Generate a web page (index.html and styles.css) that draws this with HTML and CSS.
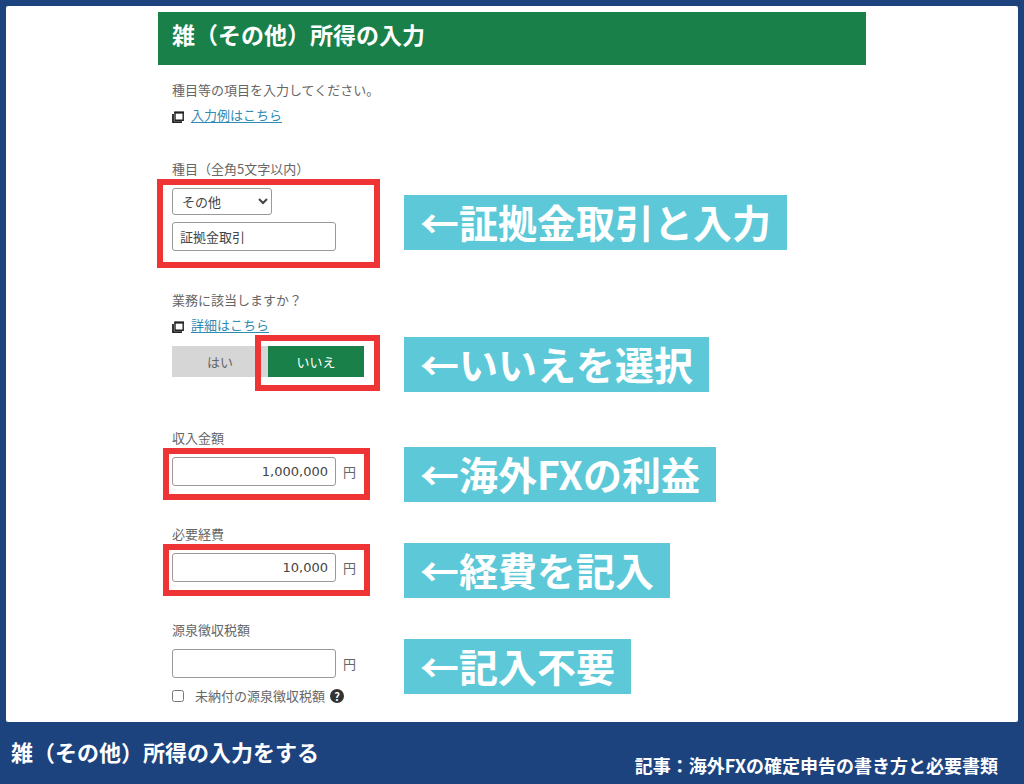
FILE: index.html
```
<!DOCTYPE html>
<html lang="ja">
<head>
  <meta charset="UTF-8">
  <meta name="viewport" content="width=device-width, initial-scale=1">
  <title>雑（その他）所得の入力</title>
  <link rel="stylesheet" href="styles.css">
</head>
<body>
  <main class="sheet">
    <form class="form">
      <h1 class="form-title">雑（その他）所得の入力</h1>

      <div class="intro">
        <p class="line">種目等の項目を入力してください。</p>
        <p class="line">
          <svg class="window-icon" viewBox="0 0 12 12"><use href="#window"/></svg>
          <a href="#">入力例はこちら</a>
        </p>
      </div>

      <!-- Item -->
      <div class="field">
        <label class="line" for="item">種目（全角5文字以内）</label>
        <div class="controls">
          <div class="control-area stack marked marked--item">
            <select class="select" id="item">
              <option>その他</option>
            </select>
            <input class="text-box" type="text" value="証拠金取引" aria-label="種目">
          </div>
          <span class="callout">←証拠金取引と入力</span>
        </div>
      </div>

      <!-- Business yes / no -->
      <div class="field field--choice">
        <p class="line">業務に該当しますか？</p>
        <p class="line">
          <svg class="window-icon" viewBox="0 0 12 12"><use href="#window"/></svg>
          <a href="#">詳細はこちら</a>
        </p>
        <div class="controls">
          <div class="control-area choices">
            <button class="choice" type="button">はい</button>
            <span class="marked marked--choice">
              <button class="choice choice--on" type="button">いいえ</button>
            </span>
          </div>
          <span class="callout">←いいえを選択</span>
        </div>
      </div>

      <!-- Amounts -->
      <div class="field field--income">
        <label class="line" for="income">収入金額</label>
        <div class="controls">
          <div class="control-area">
            <span class="amount marked marked--amount">
              <input class="text-box text-box--number" type="text" id="income" value="1,000,000">円
            </span>
          </div>
          <span class="callout">←海外FXの利益</span>
        </div>
      </div>

      <div class="field">
        <label class="line" for="expenses">必要経費</label>
        <div class="controls">
          <div class="control-area">
            <span class="amount marked marked--amount">
              <input class="text-box text-box--number" type="text" id="expenses" value="10,000">円
            </span>
          </div>
          <span class="callout">←経費を記入</span>
        </div>
      </div>

      <div class="field">
        <label class="line" for="withheld">源泉徴収税額</label>
        <div class="controls">
          <div class="control-area">
            <span class="amount">
              <input class="text-box text-box--number" type="text" id="withheld">円
            </span>
          </div>
          <span class="callout">←記入不要</span>
        </div>
        <div class="check-row">
          <input class="check" type="checkbox" id="unpaid">
          <label for="unpaid">未納付の源泉徴収税額</label>
          <button class="help" type="button">?</button>
        </div>
      </div>
    </form>
  </main>

  <footer class="caption">
    <strong class="caption-title">雑（その他）所得の入力をする</strong>
    <span class="caption-source">記事：海外FXの確定申告の書き方と必要書類</span>
  </footer>

  <!-- SVG -->
  <svg style="display: none;">
    <symbol id="window" viewBox="0 0 12 12">
      <path d="M3 1.5H11.2V9.2H3Z" fill="#fff" stroke="#222" stroke-width="1.4"/>
      <path d="M2.3 1.5H12" stroke="#222" stroke-width="2"/>
      <path d="M1 3V11.2H10" fill="none" stroke="#222" stroke-width="1.8"/>
    </symbol>
  </svg>
</body>
</html>
```

FILE: styles.css
```
*, *:before,
*:after {
  box-sizing: border-box;
}

body {
  margin: 0;
  padding: 6px 6px 0;
  min-height: 100vh;
  display: flex;
  flex-direction: column;
  background: #1d437f;
  color: #666;
  font: 400 13px/25px "Noto Sans CJK JP", sans-serif;
}

p,
h1 {
  margin: 0;
}

a {
  color: #2f8bb3;
  text-underline-offset: 2px;
}

input,
select,
button {
  margin: 0;
  font: inherit;
  color: inherit;
}

.sheet {
  padding: 6px 0 14px;
  background: #fff;
  border-radius: 2px;
}

.form {
  max-width: 708px;
  margin: 0 auto;
}

.form-title {
  padding: 7px 14px 16px;
  background: #1a804a;
  color: #fff;
  font-size: 23px;
  line-height: 30px;
}

.intro {
  padding: 12px 14px 0;
}

.line {
  display: flex;
  align-items: center;
}

.window-icon {
  width: 12px;
  height: 12px;
  margin: 4px 7px 0 0;
}

.field {
  padding: 0 14px;
  margin-top: 35px;
}

.intro + .field {
  margin-top: 29px;
}

.field--choice {
  margin-top: 36px;
}

.field--income {
  margin-top: 48px;
}

.controls {
  display: flex;
  align-items: center;
  margin-top: 7px;
}

.field--choice .controls {
  margin-top: 9px;
}

.control-area {
  flex: none;
  width: 232px;
}

.stack {
  display: flex;
  flex-direction: column;
  align-items: flex-start;
  gap: 7px;
}

.select {
  width: 100px;
  height: 27px;
  padding: 0 0 0 5px;
  border: 1px solid #999;
  border-radius: 3px;
  background: #fff;
  color: #444;
}

.text-box {
  width: 164px;
  height: 29px;
  padding: 0 7px;
  border: 1px solid #999;
  border-radius: 3px;
  background: #fff;
  color: #444;
}

.text-box--number {
  font-family: "DejaVu Sans", sans-serif;
  text-align: right;
}

.amount {
  display: flex;
  align-items: center;
  width: 184px;
  gap: 7px;
}

.choices {
  display: flex;
}

.choice {
  display: block;
  width: 96px;
  height: 31px;
  padding: 0;
  border: 0;
  background: #d6d6d6;
}

.choice--on {
  background: #1a804a;
  color: #fff;
}

/* Red frame drawn over the controls */
.marked {
  position: relative;
}

.marked::after {
  content: "";
  position: absolute;
  border: 6px solid #ee3434;
  pointer-events: none;
}

.marked--item::after {
  inset: -9px 24px -17px -15px;
}

.marked--choice::after {
  inset: -11px -16px -14px -13px;
}

.marked--amount::after {
  inset: -9px -14px -14px -9px;
}

.callout {
  flex: none;
  margin: -10px 0 -16px;
  padding: 0 16px 3px;
  background: #5dc9d8;
  color: #fff;
  font-size: 39px;
  font-weight: 700;
  line-height: 52px;
}

.check-row {
  display: flex;
  align-items: center;
  margin-top: 5px;
}

.check {
  width: 12px;
  height: 12px;
  margin-right: 11px;
}

.help {
  width: 14px;
  height: 14px;
  margin-left: 5px;
  padding: 0;
  border: 0;
  border-radius: 50%;
  background: #333;
  color: #fff;
  font-size: 11px;
  font-weight: 700;
  line-height: 14px;
}

.caption {
  flex: 1;
  display: flex;
  justify-content: space-between;
  padding: 11px 20px 0 5px;
  color: #fff;
}

.caption-title {
  font-size: 22px;
  line-height: 36px;
}

.caption-source {
  margin-top: 18px;
  font-size: 18px;
  font-weight: 700;
  line-height: 28px;
}
```
